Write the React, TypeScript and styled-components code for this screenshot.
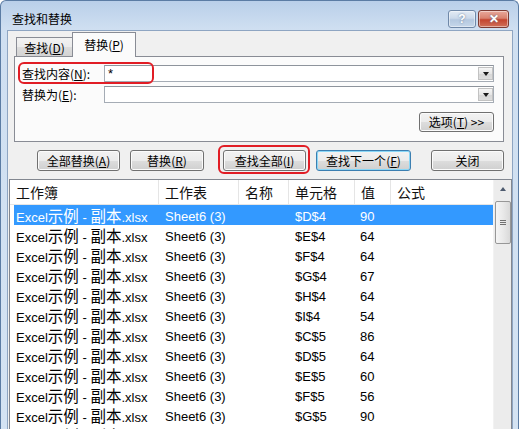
import React from "react";
import styled, { createGlobalStyle } from "styled-components";

const cjk = `"Noto Sans CJK SC", "Liberation Sans", sans-serif`;
const latin = `"Liberation Sans", "Noto Sans CJK SC", sans-serif`;

const GlobalStyle = createGlobalStyle`
  html, body { margin: 0; padding: 0; background: #fff; }
  body { width: 519px; height: 429px; overflow: hidden; }
`;

const Frame = styled.div`
  box-sizing: border-box;
  width: 519px;
  height: 429px;
  overflow: hidden;
  padding: 0 5px 0 6px;
  background: linear-gradient(180deg, #b9cfe9 0, #cfdff1 28px, #d4e3f3 100%);
  border: 1px solid #5b7ca4;
  border-bottom: none;
  border-radius: 6px 6px 0 0;
  display: flex;
  flex-direction: column;
`;

const TitleBar = styled.div`
  flex-shrink: 0;
  height: 29px;
  margin: 0 -5px 0 -6px;
  padding-left: 11px;
  display: flex;
  align-items: flex-start;
`;

const Title = styled.div`
  font: 12px/16px ${cjk};
  color: #000;
  margin-top: 10px;
`;

const Caption = styled.div`
  margin: 9px 9px 0 auto;
  display: flex;
  gap: 2px;
`;

const CapBtn = styled.div<{ $close?: boolean; $w: number }>`
  box-sizing: border-box;
  width: ${(p) => p.$w}px;
  height: 18px;
  border: 1px solid ${(p) => (p.$close ? "#7c3b33" : "#6f88a8")};
  border-radius: 3px;
  display: flex;
  align-items: center;
  justify-content: center;
  background: ${(p) =>
    p.$close
      ? "linear-gradient(180deg, #e9a99b 0%, #d9826f 45%, #c4452f 55%, #d0715a 100%)"
      : "linear-gradient(180deg, #e3ebf5 0%, #cbd9ea 45%, #b4c8e0 55%, #c6d7ea 100%)"};
  box-shadow: inset 0 0 0 1px rgba(255, 255, 255, 0.45);
  color: #fff;
  font: bold 12px/12px ${latin};
  text-shadow: 0 0 2px #5a6f8c;
`;

const Body = styled.div`
  flex: 1;
  min-height: 0;
  background: #f0f0f0;
  border: 1px solid #8ea5c2;
  border-bottom: none;
  display: flex;
  flex-direction: column;
`;

const TabStrip = styled.div`
  flex-shrink: 0;
  height: 24px;
  margin-top: 1px;
  padding-left: 8px;
  display: flex;
  align-items: flex-end;
`;

const Tab = styled.div<{ $active?: boolean }>`
  box-sizing: border-box;
  position: relative;
  z-index: ${(p) => (p.$active ? 1 : 0)};
  width: ${(p) => (p.$active ? 64 : 56)}px;
  height: ${(p) => (p.$active ? 25 : 19)}px;
  margin-bottom: ${(p) => (p.$active ? -1 : 0)}px;
  border: 1px solid #898c95;
  border-bottom: none;
  ${(p) => (p.$active ? "" : "border-right: none;")}
  background: ${(p) =>
    p.$active
      ? "#fbfbfb"
      : "linear-gradient(180deg, #f2f2f2 0%, #ebebeb 50%, #dddddd 51%, #d3d3d3 100%)"};
  display: flex;
  align-items: center;
  justify-content: center;
  font: 12px/16px ${cjk};
  color: #000;
  padding-top: ${(p) => (p.$active ? 0 : 1)}px;
`;

const Panel = styled.div`
  flex-shrink: 0;
  box-sizing: border-box;
  position: relative;
  width: 490px;
  margin-left: 6px;
  border: 1px solid #898c95;
  background: #fbfbfb;
  padding: 8px 9px 9px 7px;
  display: flex;
  flex-direction: column;
  gap: 4px;
`;

const FieldRow = styled.div`
  display: grid;
  grid-template-columns: 82px 1fr;
  align-items: center;
  height: 17px;
`;

const Label = styled.div`
  font: 12px/16px ${cjk};
  color: #000;
`;

const Combo = styled.div`
  box-sizing: border-box;
  height: 17px;
  border: 1px solid #a5acb5;
  border-top-color: #8e949c;
  background: #fff;
  display: flex;
  align-items: center;
  font: 13px/15px ${latin};
  padding-left: 3px;
`;

const DropBtn = styled.div`
  box-sizing: border-box;
  width: 15px;
  height: 13px;
  margin-left: auto;
  border: 1px solid #c2c2c2;
  background: linear-gradient(180deg, #f6f6f6 0%, #e6e6e6 50%, #d6d6d6 51%, #dedede 100%);
  display: flex;
  align-items: center;
  justify-content: center;
  &::after {
    content: "";
    border-top: 4px solid #1a1a1a;
    border-left: 3.5px solid transparent;
    border-right: 3.5px solid transparent;
  }
`;

const Highlight = styled.div`
  position: absolute;
  left: 3px;
  top: 5px;
  width: 136px;
  height: 22px;
  box-sizing: border-box;
  border: 2px solid #e11d25;
  border-radius: 6px;
  pointer-events: none;
`;

const OptionsRow = styled.div`
  display: flex;
  justify-content: flex-end;
  margin-top: 5px;
`;

const Button = styled.button<{ $w: number; $ml?: number; $default?: boolean }>`
  box-sizing: border-box;
  width: ${(p) => p.$w}px;
  height: 21px;
  margin: 0 0 0 ${(p) => p.$ml ?? 0}px;
  padding: 0;
  border: 1px solid ${(p) => (p.$default ? "#3c7fb1" : "#707070")};
  border-radius: 3px;
  background: linear-gradient(180deg, #f2f2f2 0%, #ebebeb 50%, #dddddd 51%, #cfcfcf 100%);
  box-shadow: inset 0 0 0 1px ${(p) => (p.$default ? "#8ad7f7" : "#fbfbfb")};
  font: 12px/16px ${cjk};
  color: #000;
  display: flex;
  align-items: center;
  justify-content: center;
`;

const SmallButton = styled(Button)`
  height: 20px;
`;

const ButtonRow = styled.div`
  flex-shrink: 0;
  display: flex;
  margin-top: 8px;
  padding-left: 29px;
`;

const Marked = styled.div<{ $ml: number }>`
  position: relative;
  margin-left: ${(p) => p.$ml}px;
  display: flex;
  &::after {
    content: "";
    position: absolute;
    left: -5px;
    right: -4px;
    top: -5px;
    bottom: -3px;
    border: 2px solid #e11d25;
    border-radius: 6px;
  }
`;

const List = styled.div`
  flex: 1;
  min-height: 0;
  margin: 8px 0 0 1px;
  border: 1px solid #828790;
  border-bottom: none;
  background: #fff;
  display: flex;
  overflow: hidden;
`;

const ListMain = styled.div`
  flex: 1;
  min-width: 0;
  display: flex;
  flex-direction: column;
`;

const Header = styled.div`
  flex-shrink: 0;
  display: grid;
  grid-template-columns: 149px 80px 50px 66px 36px 1fr;
  height: 25px;
  box-sizing: border-box;
  border-bottom: 1px solid #e5e5e5;
`;

const HeadCell = styled.div<{ $last?: boolean }>`
  border-right: ${(p) => (p.$last ? "none" : "1px solid #e5e5e5")};
  padding-left: 6px;
  display: flex;
  align-items: center;
  font: 14px/18px ${cjk};
  color: #111;
`;

const Row = styled.div<{ $selected?: boolean }>`
  flex-shrink: 0;
  display: grid;
  grid-template-columns: 149px 130px 65px 1fr;
  height: 20px;
  margin-left: 4px;
  padding-left: 2px;
  align-items: center;
  background: ${(p) => (p.$selected ? "#3399ff" : "transparent")};
  color: ${(p) => (p.$selected ? "#fff" : "#000")};
  font: 13px/20px ${latin};
  white-space: nowrap;
  overflow: hidden;
`;

const Han = styled.span`
  font: 15.5px/20px ${cjk};
`;

const Scrollbar = styled.div`
  width: 17px;
  background: #ececec;
  border-left: 1px solid #f2f2f2;
  display: flex;
  flex-direction: column;
  align-items: center;
`;

const UpArrow = styled.div`
  height: 17px;
  display: flex;
  align-items: center;
  justify-content: center;
  &::after {
    content: "";
    border-bottom: 4px solid #4d5a6e;
    border-left: 3.5px solid transparent;
    border-right: 3.5px solid transparent;
  }
`;

const Thumb = styled.div`
  box-sizing: border-box;
  width: 16px;
  height: 43px;
  margin-top: 4px;
  border: 1px solid #979797;
  border-radius: 2px;
  background: linear-gradient(90deg, #f5f5f5 0%, #e9e9e9 50%, #d9d9d9 100%);
  display: flex;
  flex-direction: column;
  align-items: center;
  justify-content: center;
  gap: 1px;
`;

const Grip = styled.div`
  width: 6px;
  height: 1px;
  background: #707070;
`;

const Mn = ({ k }: { k: string }) => (
  <>
    (<u>{k}</u>)
  </>
);

const rows: [string, string][] = [
  ["$D$4", "90"],
  ["$E$4", "64"],
  ["$F$4", "64"],
  ["$G$4", "67"],
  ["$H$4", "64"],
  ["$I$4", "54"],
  ["$C$5", "86"],
  ["$D$5", "64"],
  ["$E$5", "60"],
  ["$F$5", "56"],
  ["$G$5", "90"],
  ["$H$5", "64"],
];

export default function App() {
  return (
    <>
      <GlobalStyle />
      <Frame>
        <TitleBar>
          <Title>查找和替换</Title>
          <Caption>
            <CapBtn $w={28}>?</CapBtn>
            <CapBtn $w={31} $close>
              ✕
            </CapBtn>
          </Caption>
        </TitleBar>
        <Body>
          <TabStrip>
            <Tab>
              查找<Mn k="D" />
            </Tab>
            <Tab $active>
              替换<Mn k="P" />
            </Tab>
          </TabStrip>
          <Panel>
            <Highlight />
            <FieldRow>
              <Label>
                查找内容<Mn k="N" />:
              </Label>
              <Combo>
                *
                <DropBtn />
              </Combo>
            </FieldRow>
            <FieldRow>
              <Label>
                替换为<Mn k="E" />:
              </Label>
              <Combo>
                <DropBtn />
              </Combo>
            </FieldRow>
            <OptionsRow>
              <SmallButton $w={75}>
                选项<Mn k="T" />&nbsp;&gt;&gt;
              </SmallButton>
            </OptionsRow>
          </Panel>
          <ButtonRow>
            <Button $w={83}>
              全部替换<Mn k="A" />
            </Button>
            <Button $w={74} $ml={10}>
              替换<Mn k="R" />
            </Button>
            <Marked $ml={19}>
              <Button $w={83}>
                查找全部<Mn k="I" />
              </Button>
            </Marked>
            <Button $w={95} $ml={10} $default>
              查找下一个<Mn k="F" />
            </Button>
            <Button $w={73} $ml={20}>
              关闭
            </Button>
          </ButtonRow>
          <List>
            <ListMain>
              <Header>
                <HeadCell>工作簿</HeadCell>
                <HeadCell>工作表</HeadCell>
                <HeadCell>名称</HeadCell>
                <HeadCell>单元格</HeadCell>
                <HeadCell>值</HeadCell>
                <HeadCell $last>公式</HeadCell>
              </Header>
              {rows.map(([cell, val], i) => (
                <Row key={i} $selected={i === 0}>
                  <span>
                    Excel<Han>示例</Han> - <Han>副本</Han>.xlsx
                  </span>
                  <span>Sheet6 (3)</span>
                  <span>{cell}</span>
                  <span>{val}</span>
                </Row>
              ))}
            </ListMain>
            <Scrollbar>
              <UpArrow />
              <Thumb>
                <Grip />
                <Grip />
                <Grip />
              </Thumb>
            </Scrollbar>
          </List>
        </Body>
      </Frame>
    </>
  );
}
